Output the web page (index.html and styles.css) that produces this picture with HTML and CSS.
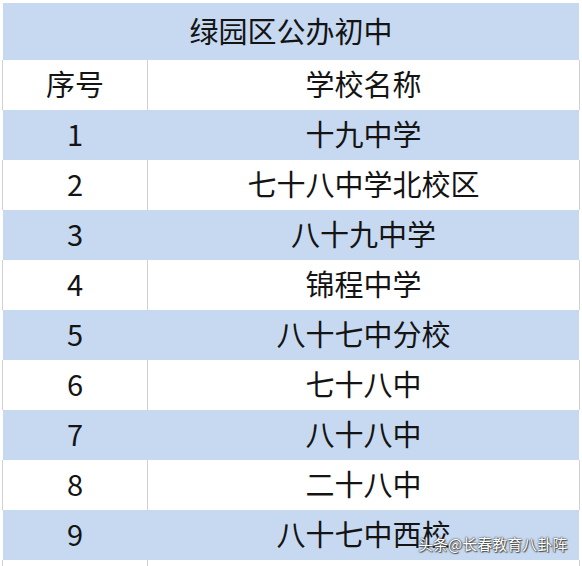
FILE: index.html
```html
<!DOCTYPE html>
<html lang="zh">
<head>
<meta charset="utf-8">
<link rel="stylesheet" href="styles.css">
</head>
<body>
<div class="sheet">
  <div class="row title blue"><div class="cell full">绿园区公办初中</div></div>
  <div class="row white head"><div class="cell num">序号</div><div class="cell name">学校名称</div></div>
  <div class="row blue"><div class="cell num">1</div><div class="cell name">十九中学</div></div>
  <div class="row white"><div class="cell num">2</div><div class="cell name">七十八中学北校区</div></div>
  <div class="row blue"><div class="cell num">3</div><div class="cell name">八十九中学</div></div>
  <div class="row white"><div class="cell num">4</div><div class="cell name">锦程中学</div></div>
  <div class="row blue"><div class="cell num">5</div><div class="cell name">八十七中分校</div></div>
  <div class="row white"><div class="cell num">6</div><div class="cell name">七十八中</div></div>
  <div class="row blue"><div class="cell num">7</div><div class="cell name">八十八中</div></div>
  <div class="row white"><div class="cell num">8</div><div class="cell name">二十八中</div></div>
  <div class="row blue"><div class="cell num">9</div><div class="cell name">八十七中西校</div></div>
  <div class="row white tail"><div class="cell num"></div><div class="cell name"></div></div>
</div>
<div class="watermark">头条@长春教育八卦阵</div>
</body>
</html>
```
FILE: styles.css
```css
html, body {
  margin: 0;
  padding: 0;
  background: #ffffff;
  overflow: hidden;
  height: 566px;
}
body {
  font-family: "Noto Sans CJK SC", "Noto Sans", sans-serif;
  color: #141414;
  position: relative;
}
.sheet {
  margin: 3px 0 0 2px;
  width: 578px;
  display: flex;
  flex-direction: column;
}
.row {
  display: flex;
  height: 50px;
  box-sizing: border-box;
  font-size: 29px;
  line-height: 47px;
}
.row.title {
  height: 57px;
  line-height: 54px;
}
.row.tail {
  height: 6px;
}
.blue {
  background: #c6d9f0;
  border-left: 1px solid #ffffff;
  border-right: 1px solid #ffffff;
}
.white {
  background: #ffffff;
  border-left: 1px solid #d2d2d2;
  border-right: 1px solid #d2d2d2;
}
.cell {
  text-align: center;
  white-space: nowrap;
  overflow: hidden;
}
.full {
  flex: 1;
}
.num {
  width: 144px;
  flex: none;
}
.name {
  flex: 1;
  border-left: 1px solid transparent;
}
.white .name {
  border-left-color: #d2d2d2;
}
.watermark {
  position: absolute;
  left: 418px;
  top: 534px;
  font-size: 15px;
  line-height: 20px;
  color: #ffffff;
  text-shadow: 0 0 1px #333, 0 0 2px #444, 1px 1px 1px #555;
}
```
